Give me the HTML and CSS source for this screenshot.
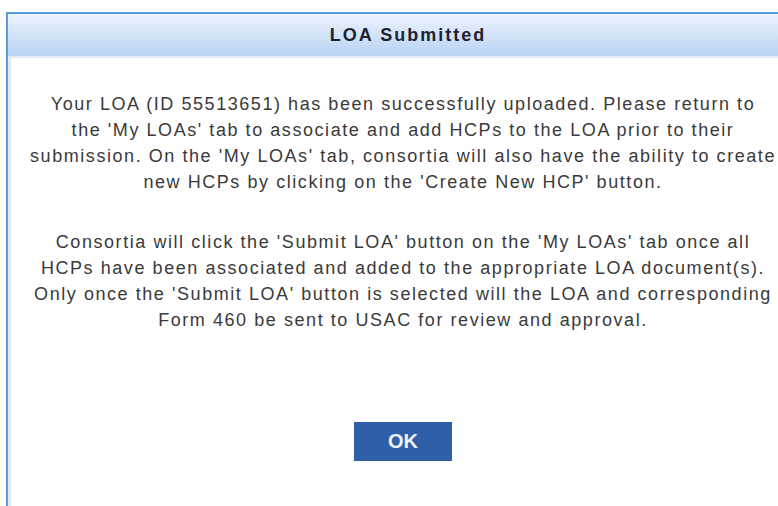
FILE: index.html
```html
<!DOCTYPE html>
<html lang="en">
<head>
<meta charset="utf-8">
<title>LOA Submitted</title>
<link rel="stylesheet" href="styles.css">
</head>
<body>
<div class="dialog">
  <div class="dialog-header">LOA Submitted</div>
  <div class="dialog-body">
    <p>Your LOA (ID 55513651) has been successfully uploaded. Please return to<br>
    the 'My LOAs' tab to associate and add HCPs to the LOA prior to their<br>
    submission. On the 'My LOAs' tab, consortia will also have the ability to create<br>
    new HCPs by clicking on the 'Create New HCP' button.</p>
    <p>Consortia will click the 'Submit LOA' button on the 'My LOAs' tab once all<br>
    HCPs have been associated and added to the appropriate LOA document(s).<br>
    Only once the 'Submit LOA' button is selected will the LOA and corresponding<br>
    Form 460 be sent to USAC for review and approval.</p>
    <div class="actions">
      <button class="btn-ok" type="button">OK</button>
    </div>
  </div>
</div>
</body>
</html>
```

FILE: styles.css
```css
html, body {
  margin: 0;
  padding: 0;
  background: #ffffff;
  overflow: hidden;
}

body {
  font-family: "Liberation Sans", Arial, sans-serif;
  color: #3a3a3a;
}

.dialog {
  margin: 12px 0 0 6px;
  width: 790px;
  height: 520px;
  border-top: 2px solid #5b9bd9;
  border-left: 2px solid #5b9bd9;
  box-shadow: inset 3px 0 0 #e3e8ee;
  background: #ffffff;
}

.dialog-header {
  height: 42px;
  line-height: 42px;
  padding-left: 10px;
  text-align: center;
  font-size: 18px;
  font-weight: bold;
  letter-spacing: 2px;
  color: #1e2230;
  background: linear-gradient(#eef4fd, #b8d2f3);
  border-bottom: 2px solid #e2ebf6;
}

.dialog-body {
  padding: 33px 0 0;
  text-align: center;
  white-space: nowrap;
}

.dialog-body p {
  margin: 0 0 34px;
  font-size: 18px;
  line-height: 26px;
  letter-spacing: 1.56px;
}

.actions {
  padding-top: 55px;
}

.btn-ok {
  width: 98px;
  height: 39px;
  border: none;
  background: #2e5fa8;
  color: #eef3fb;
  font-family: "Liberation Sans", Arial, sans-serif;
  font-size: 20px;
  font-weight: bold;
}
```
